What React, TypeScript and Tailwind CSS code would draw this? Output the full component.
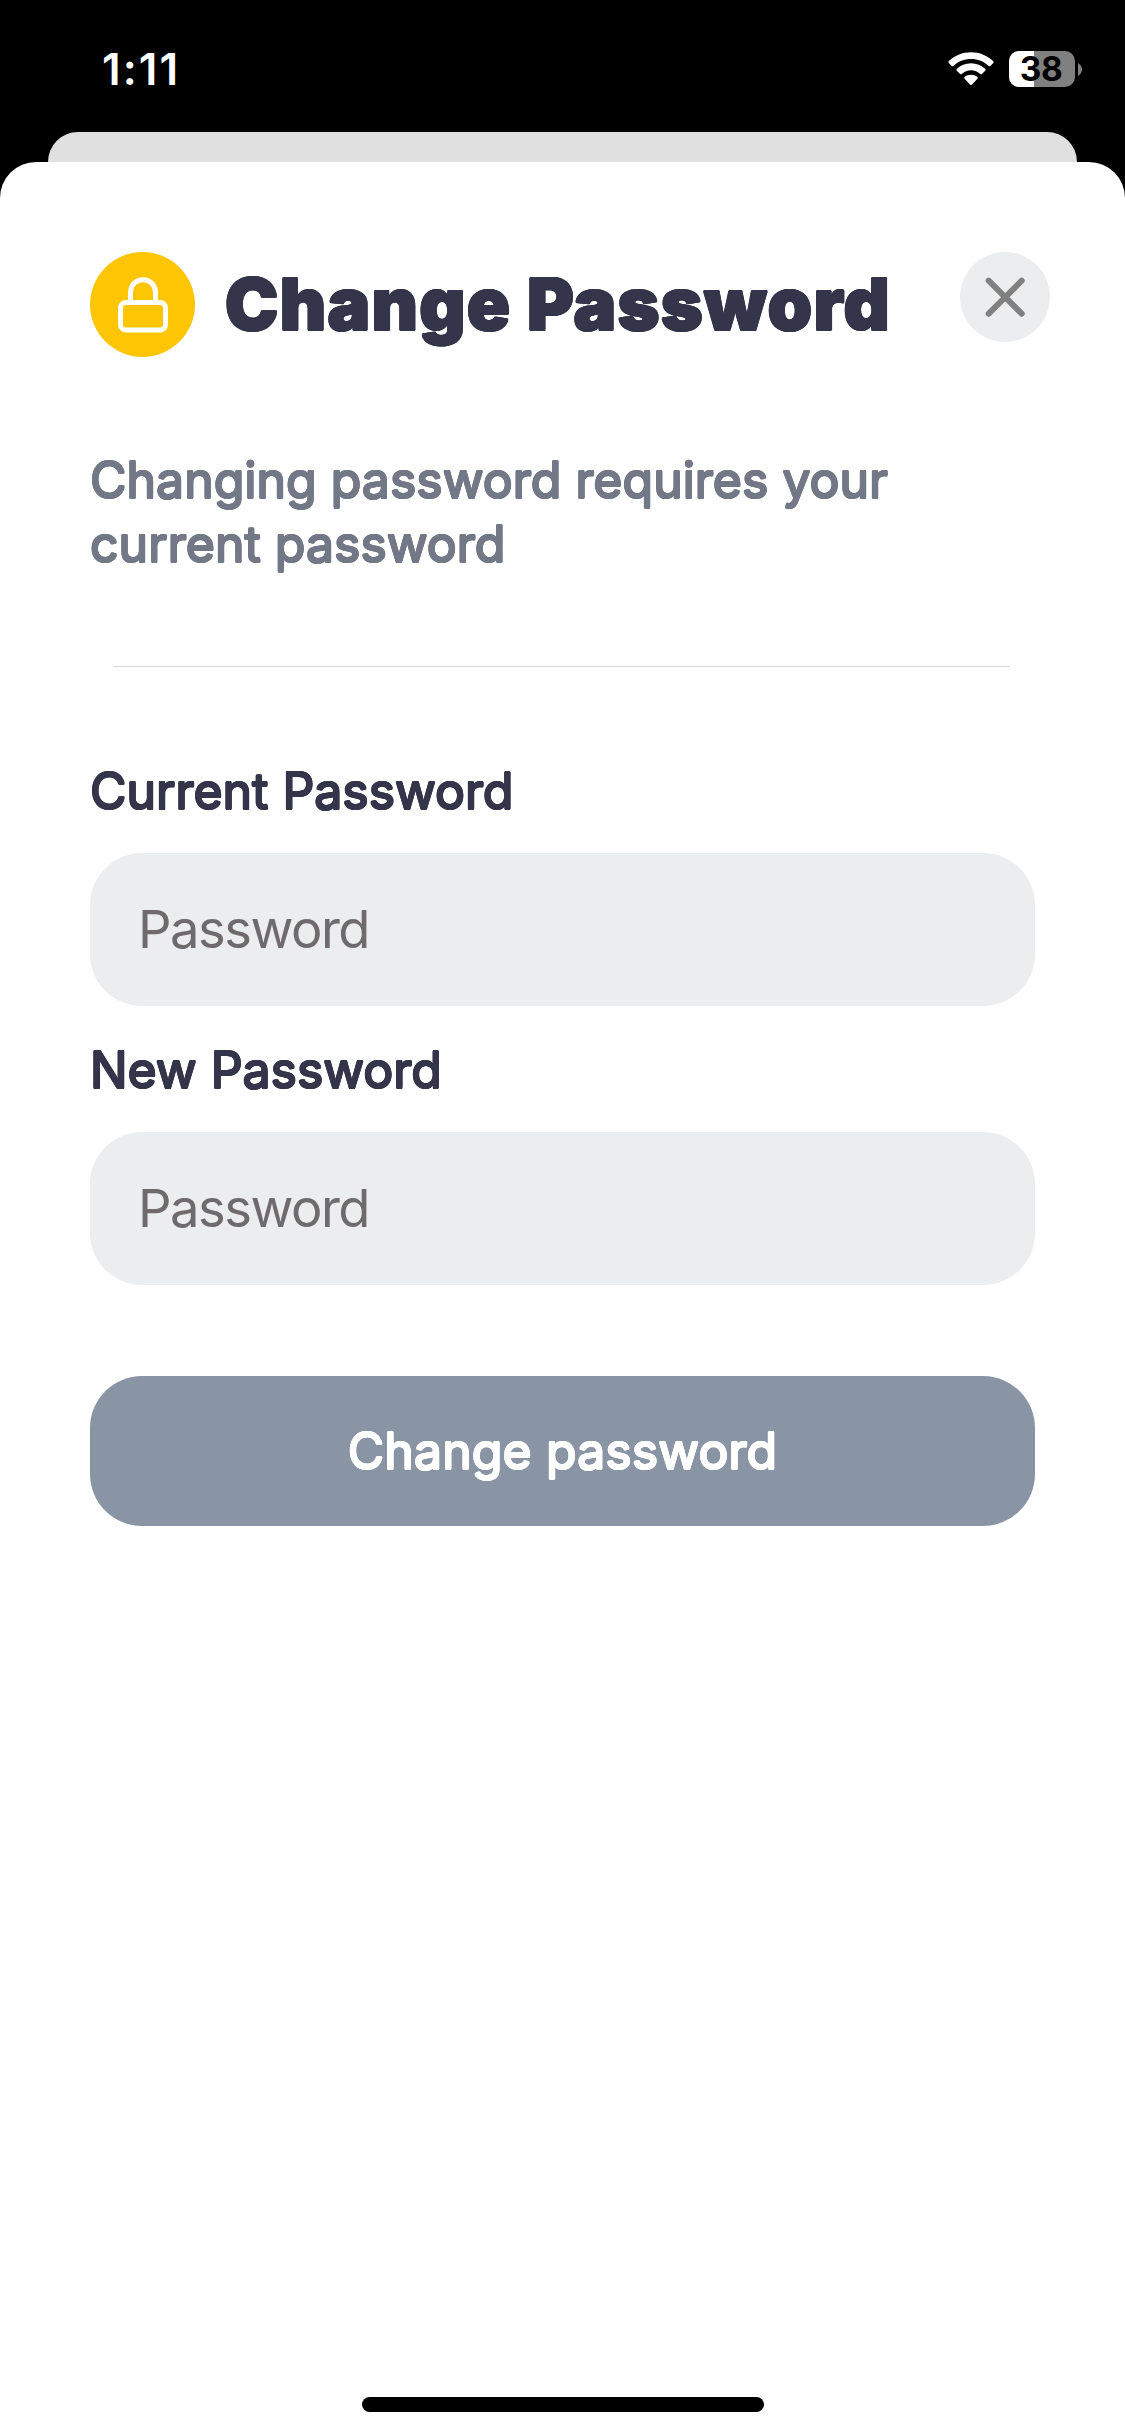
import { useState } from "react";

// The title and labels are set in a rounded face: a lighter weight is
// thickened evenly in every direction, which softens its corners.
const rounded =
  "[text-shadow:1px_0_0,-1px_0_0,0_1px_0,0_-1px_0,0.7px_0.7px_0,-0.7px_0.7px_0,0.7px_-0.7px_0,-0.7px_-0.7px_0]";

function WifiIcon() {
  return (
    <svg className="h-[34px] w-[46px]" viewBox="0 0 46 34" fill="white">
      <path d="M23 0.3C31.6 0.3 39.6 3.7 45.3 9.3C45.8 9.8 45.8 10.4 45.3 10.9L42.3 14C41.9 14.4 41.2 14.4 40.7 14C36 9.5 29.7 7 23 7C16.3 7 10 9.5 5.3 14C4.8 14.4 4.1 14.4 3.7 14L0.7 10.9C0.2 10.4 0.2 9.8 0.7 9.3C6.4 3.7 14.4 0.3 23 0.3Z" />
      <path d="M23 11.3C28.5 11.3 33.5 13.4 37.2 17C37.7 17.5 37.7 18.2 37.2 18.7L33.9 21.9C33.4 22.4 32.8 22.4 32.3 22C29.8 19.7 26.5 18.3 23 18.3C19.5 18.3 16.2 19.7 13.7 22C13.2 22.4 12.6 22.4 12.1 21.9L8.8 18.7C8.3 18.2 8.3 17.5 8.8 17C12.5 13.4 17.5 11.3 23 11.3Z" />
      <path d="M23 22.8C25.5 22.8 27.7 23.6 29.4 25.1C29.9 25.5 29.9 26.2 29.4 26.7L23.8 32.7C23.3 33.2 22.7 33.2 22.2 32.7L16.6 26.7C16.1 26.2 16.1 25.5 16.6 25.1C18.3 23.6 20.5 22.8 23 22.8Z" />
    </svg>
  );
}

function Battery({ level }: { level: number }) {
  return (
    <div className="flex items-center gap-[3px]">
      <div className="relative flex h-9 w-[66px] items-center justify-center rounded-[10px] bg-[#808080]">
        <div
          className="absolute inset-y-0 left-0 rounded-l-[10px] bg-white"
          style={{ width: `${level}%` }}
        />
        <span className="relative pr-[2px] text-[33.5px] font-bold leading-[36px] tracking-[-0.5px] text-black">
          {level}
        </span>
      </div>
      <svg className="h-[13px] w-[4px]" viewBox="0 0 4 13" fill="#808080">
        <path d="M0 0C2.4 1.2 4 3.7 4 6.5C4 9.3 2.4 11.8 0 13Z" />
      </svg>
    </div>
  );
}

function StatusBar() {
  return (
    <div className="flex h-[132px] items-start justify-between pl-[102px] pr-[43px] pt-[51px]">
      <span className="text-[44px] font-semibold leading-[36px] tracking-[2.1px] text-white">
        1:11
      </span>
      <div className="flex items-center gap-[15px]">
        <WifiIcon />
        <Battery level={38} />
      </div>
    </div>
  );
}

function LockBadge() {
  return (
    <div className="size-[105px] shrink-0 rounded-full bg-[#fec505]">
      <svg
        className="size-full"
        viewBox="0 0 105 105"
        fill="none"
        stroke="white"
        strokeWidth="5"
      >
        <rect x="30.5" y="50.5" width="45" height="27.5" rx="5.5" />
        <path d="M40.5 50V40.5C40.5 33 46 27.7 53 27.7C60 27.7 65.5 33 65.5 40.5V50" />
      </svg>
    </div>
  );
}

function PasswordField({
  label,
  value,
  onChange,
}: {
  label: string;
  value: string;
  onChange: (value: string) => void;
}) {
  return (
    <label className="flex flex-col">
      <span
        className={`h-[64px] text-[50px] leading-[64px] tracking-[-0.05px] text-[#34354a] ${rounded}`}
      >
        {label}
      </span>
      <input
        type="password"
        placeholder="Password"
        value={value}
        onChange={(e) => onChange(e.target.value)}
        className="mt-[30px] h-[153px] w-full rounded-[52px] bg-[#ebedee] pb-[1px] pl-[48px] text-[52.5px] tracking-[-1.5px] outline-none placeholder:text-[#6f6a6b] placeholder:opacity-100"
      />
    </label>
  );
}

export default function App() {
  const [current, setCurrent] = useState("");
  const [next, setNext] = useState("");

  return (
    <div className="flex h-[2436px] w-[1125px] flex-col overflow-hidden bg-black font-['Inter','Liberation_Sans',sans-serif]">
      <StatusBar />
      <div className="mx-[48px] h-[30px] shrink-0 rounded-t-[30px] bg-[#e0e0e0]" />

      <div className="flex flex-1 flex-col rounded-t-[36px] bg-white px-[90px] pt-[90px]">
        <div className="-mr-[15px] flex items-start">
          <LockBadge />
          <h1
            className={`ml-[30px] flex-1 whitespace-nowrap text-[71.5px] font-black leading-[105px] tracking-[1.3px] text-[#34354a] ${rounded}`}
          >
            Change Password
          </h1>
          <button className="flex size-[90px] items-center justify-center rounded-full bg-[#ebedee]">
            <svg
              className="size-[40px]"
              viewBox="0 0 40 40"
              stroke="#808080"
              strokeWidth="6"
              strokeLinecap="round"
            >
              <path d="M3.7 3.7L36.7 36.7M36.7 3.7L3.7 36.7" />
            </svg>
          </button>
        </div>

        <p
          className={`mt-[91px] text-[50px] leading-[64px] text-[#737887] ${rounded}`}
        >
          Changing password requires your
          <br />
          current password
        </p>

        <div className="ml-[24px] mr-[25px] mt-[90px] h-px bg-[#d9d9d9]" />

        <div className="mt-[92px] flex flex-col gap-[32px]">
          <PasswordField
            label="Current Password"
            value={current}
            onChange={setCurrent}
          />
          <PasswordField label="New Password" value={next} onChange={setNext} />
        </div>

        <button
          className={`mt-[91px] h-[150px] rounded-[52px] bg-[#8994a4] text-[50px] tracking-[0.1px] text-white ${rounded}`}
        >
          Change password
        </button>

        <div className="mb-[24px] mt-auto h-[15px] w-[402px] self-center rounded-full bg-black" />
      </div>
    </div>
  );
}
